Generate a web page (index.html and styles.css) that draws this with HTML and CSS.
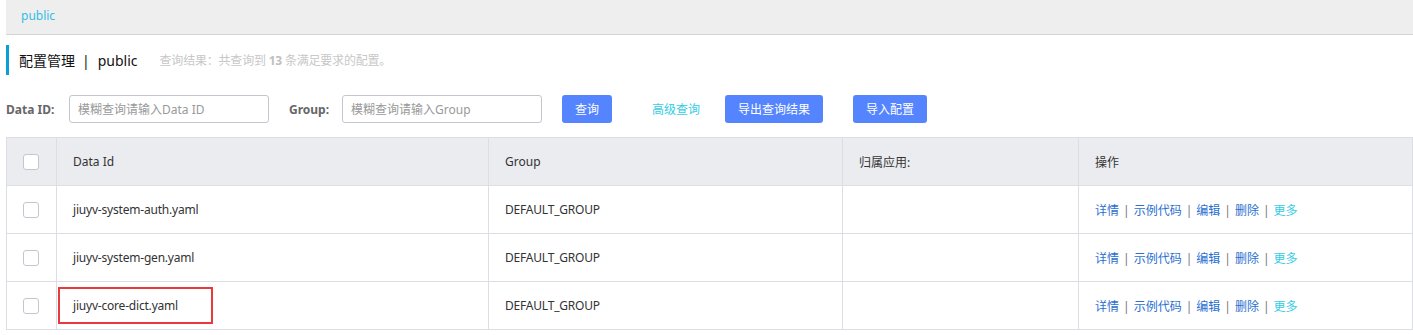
FILE: index.html
```html
<!DOCTYPE html>
<html lang="zh-CN">
  <head>
    <meta charset="UTF-8" />
    <meta name="viewport" content="width=device-width, initial-scale=1" />
    <title>配置管理</title>
    <link rel="stylesheet" href="styles.css">
  </head>

  <body>
    <!-- Namespace bar -->
    <div class="namespace-bar">
      <a class="namespace-link">public</a>
    </div>

    <!-- Page title -->
    <div class="page-title">
      <span class="title-main">配置管理</span>
      <span class="title-sep">|</span>
      <span class="title-main">public</span>
      <span class="title-summary">查询结果：共查询到 <strong>13</strong> 条满足要求的配置。</span>
    </div>

    <!-- Search form -->
    <div class="search-form">
      <label class="form-label id-label">Data ID:</label>
      <input class="form-input" type="text" placeholder="模糊查询请输入Data ID" />
      <label class="form-label group-label">Group:</label>
      <input class="form-input" type="text" placeholder="模糊查询请输入Group" />
      <button class="btn btn-query">查询</button>
      <a class="advanced-link">高级查询</a>
      <button class="btn btn-export">导出查询结果</button>
      <button class="btn btn-import">导入配置</button>
    </div>

    <!-- Config table -->
    <table class="config-table">
      <thead>
        <tr>
          <th class="col-check"><span class="checkbox"></span></th>
          <th class="col-id">Data Id</th>
          <th class="col-group">Group</th>
          <th class="col-app">归属应用:</th>
          <th>操作</th>
        </tr>
      </thead>
      <tbody>
        <tr>
          <td class="col-check"><span class="checkbox"></span></td>
          <td>jiuyv-system-auth.yaml</td>
          <td>DEFAULT_GROUP</td>
          <td></td>
          <td class="actions">
            <a>详情</a><span class="sep">|</span><a>示例代码</a><span class="sep">|</span><a>编辑</a><span class="sep">|</span><a>删除</a><span class="sep">|</span><a class="more">更多</a>
          </td>
        </tr>
        <tr>
          <td class="col-check"><span class="checkbox"></span></td>
          <td>jiuyv-system-gen.yaml</td>
          <td>DEFAULT_GROUP</td>
          <td></td>
          <td class="actions">
            <a>详情</a><span class="sep">|</span><a>示例代码</a><span class="sep">|</span><a>编辑</a><span class="sep">|</span><a>删除</a><span class="sep">|</span><a class="more">更多</a>
          </td>
        </tr>
        <tr>
          <td class="col-check"><span class="checkbox"></span></td>
          <td class="highlight-cell"><span class="highlight-box"></span>jiuyv-core-dict.yaml</td>
          <td>DEFAULT_GROUP</td>
          <td></td>
          <td class="actions">
            <a>详情</a><span class="sep">|</span><a>示例代码</a><span class="sep">|</span><a>编辑</a><span class="sep">|</span><a>删除</a><span class="sep">|</span><a class="more">更多</a>
          </td>
        </tr>
      </tbody>
    </table>
  </body>
</html>
```

FILE: styles.css
```css
/* Global Styles */
body {
  font-family: 'Noto Sans', 'Noto Sans CJK SC', sans-serif;
  font-size: 12px;
  margin: 0 0 0 6px;
  padding: 0;
  background-color: #fff;
  color: #333;
}

/* Namespace bar */
.namespace-bar {
  height: 34px;
  background-color: #eeeeee;
  border-bottom: 1px solid #d4d4d4;
  padding-left: 15px;
  display: flex;
  align-items: center;
}

.namespace-link {
  color: #33bde5;
  font-size: 12px;
  margin-top: -4px;
}

/* Title */
.page-title {
  margin-top: 10px;
  height: 30px;
  border-left: 3px solid #09a0d5;
  padding-left: 10px;
  display: flex;
  align-items: center;
}

.title-main {
  font-size: 14px;
  color: #111;
}

.title-sep {
  font-size: 14px;
  color: #111;
  margin: 0 8px 0 7px;
}

.title-summary {
  margin-left: 22px;
  color: #c8c8c8;
  font-size: 12px;
  letter-spacing: -0.2px;
}

.title-summary strong {
  color: #c0c0c0;
}

/* Search form */
.search-form {
  margin-top: 20px;
  display: flex;
  align-items: center;
  height: 28px;
}

.form-label {
  font-weight: bold;
  color: #666;
  font-size: 12px;
}

.id-label {
  width: 63px;
}

.group-label {
  width: 53px;
  margin-left: 20px;
}

.form-input {
  width: 200px;
  height: 28px;
  box-sizing: border-box;
  border: 1px solid #c4c6cf;
  border-radius: 3px;
  padding: 0 8px;
  font-family: inherit;
  font-size: 12px;
  outline: none;
}

.form-input::placeholder {
  color: #999;
}

.btn {
  height: 28px;
  border: none;
  border-radius: 3px;
  background-color: #5584ff;
  color: #fff;
  font-family: inherit;
  font-size: 12px;
  padding: 0;
  cursor: pointer;
}

.btn-query {
  width: 50px;
  margin-left: 20px;
}

.advanced-link {
  color: #33cde5;
  margin-left: 40px;
  width: 73px;
}

.btn-export {
  width: 98px;
}

.btn-import {
  width: 74px;
  margin-left: 30px;
}

/* Table */
.config-table {
  margin-top: 14px;
  width: 1407px;
  border-collapse: collapse;
  table-layout: fixed;
}

.config-table th,
.config-table td {
  height: 47px;
  border: 1px solid #dcdee3;
  padding: 0 16px;
  text-align: left;
  font-weight: normal;
  font-size: 12px;
  color: #333;
}

.config-table th {
  background-color: #ebecf0;
}

.config-table td {
  letter-spacing: -0.2px;
}

.col-check {
  width: 50px;
  box-sizing: border-box;
}

.config-table .col-check {
  padding: 0 0 0 16px;
}

.col-id {
  width: 432px;
  box-sizing: border-box;
}

.col-group {
  width: 354px;
  box-sizing: border-box;
}

.col-app {
  width: 236px;
  box-sizing: border-box;
}

.checkbox {
  display: block;
  width: 14px;
  height: 14px;
  border: 1px solid #c4c6cf;
  border-radius: 3px;
  background: #fff;
}

.config-table .actions {
  letter-spacing: 0;
}

.actions a {
  color: #2a6fd0;
}

.actions .more {
  color: #33cde5;
}

.actions .sep {
  color: #777;
  margin: 0 4px;
}

/* Annotation box */
.highlight-cell {
  position: relative;
}

.highlight-box {
  position: absolute;
  left: 1px;
  top: 5px;
  width: 151px;
  height: 33px;
  border: 2px solid #e8393d;
}
```
